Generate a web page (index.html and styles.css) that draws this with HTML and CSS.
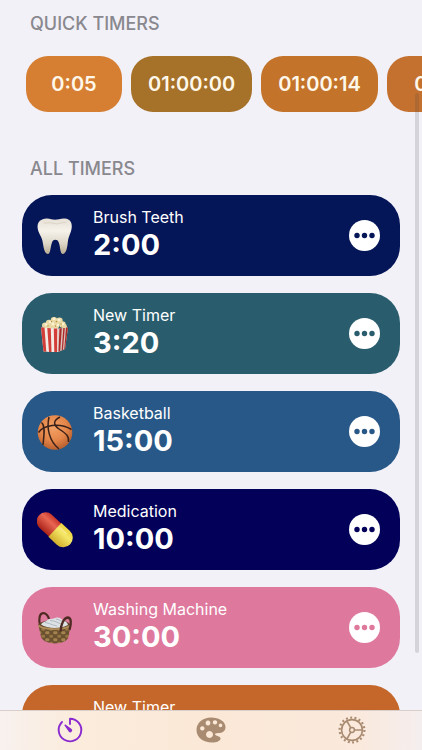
FILE: index.html
```html
<!DOCTYPE html>
<html lang="en">
<head>
  <meta charset="UTF-8">
  <meta name="viewport" content="width=device-width, initial-scale=1.0">
  <title>Timers</title>
  <link rel="stylesheet" href="styles.css">
</head>
<body>
  <main class="content">
    <h2 class="section-title">QUICK TIMERS</h2>
    <div class="quick-timers">
      <button class="quick-btn amber">0:05</button>
      <button class="quick-btn olive">01:00:00</button>
      <button class="quick-btn orange">01:00:14</button>
      <button class="quick-btn rust">0:10</button>
    </div>

    <h2 class="section-title">ALL TIMERS</h2>
    <ul class="timer-list">
      <li class="timer-card navy">
        <svg class="timer-icon" viewBox="0 0 36 36" aria-hidden="true">
          <defs>
            <linearGradient id="tooth" x1="0" y1="0" x2="0" y2="1">
              <stop offset="0" stop-color="#e6e0d6"/>
              <stop offset=".35" stop-color="#f6f2ea"/>
              <stop offset=".7" stop-color="#ddd6c8"/>
              <stop offset="1" stop-color="#b9ab90"/>
            </linearGradient>
          </defs>
          <path fill="url(#tooth)" d="M9.500 .5C13 .3 15 1.800 18 1.800S24 .2 28 .6C33 1 35.200 4.500 34.700 9.500C34.200 15 31.500 18 30.800 24C30.300 29 29.500 35.500 26 36C23 36.300 23.500 29 21.800 24.500C21 22.500 20 21.800 18.300 21.800C16.500 21.800 15.500 23 14.800 25C13.300 29.500 13.500 36.300 10.800 36C7 35.500 6.500 28 5.500 23C4.500 18 1 15 .6 9.500C.2 4 3.500 .8 9.500 .5Z"/>
          <path fill="none" stroke="#c9bfae" stroke-width="1" stroke-linecap="round" opacity=".5" d="M7 5C10 5.500 13 4 17 5.500C21 7 24 4 29 4.500"/>
        </svg>
        <div class="timer-info">
          <span class="timer-name">Brush Teeth</span>
          <span class="timer-time">2:00</span>
        </div>
        <button class="more-btn" aria-label="More options for Brush Teeth">
          <svg viewBox="0 0 31 31"><circle cx="8" cy="15.500" r="2.700"/><circle cx="15.500" cy="15.500" r="2.700"/><circle cx="23" cy="15.500" r="2.700"/></svg>
        </button>
      </li>
      <li class="timer-card teal">
        <svg class="timer-icon" viewBox="0 0 36 36" aria-hidden="true">
          <g fill="#ead9a4">
            <circle cx="8" cy="9.500" r="3"/><circle cx="12" cy="7" r="3.200"/><circle cx="17" cy="4.200" r="3.300"/>
            <circle cx="22.500" cy="4.800" r="3.200"/><circle cx="25.500" cy="8.500" r="3.200"/><circle cx="18" cy="9" r="4.500"/>
            <circle cx="27.500" cy="10.500" r="2.400"/><circle cx="12" cy="10.500" r="3"/>
          </g>
          <g fill="#fbf3d3">
            <circle cx="9" cy="8.500" r="1.300"/><circle cx="13" cy="6" r="1.300"/><circle cx="17" cy="2.800" r="1.400"/>
            <circle cx="22" cy="4" r="1.400"/><circle cx="16" cy="8" r="1.400"/><circle cx="21" cy="9" r="1.300"/><circle cx="26" cy="8" r="1.200"/>
          </g>
          <g fill="#b99343">
            <circle cx="11" cy="10" r=".7"/><circle cx="14.500" cy="5.500" r=".7"/><circle cx="19.500" cy="5.500" r=".8"/>
            <circle cx="18.500" cy="10" r=".7"/><circle cx="24" cy="8" r=".7"/><circle cx="24.500" cy="11" r=".6"/>
          </g>
          <path fill="#f3ebe5" d="M4 11.500L21.500 12.500L31 11.500L28 33L20 36.500L6.500 35.500Z"/>
          <path fill="#d43e38" d="M4 11.500H7.500L9.300 35.700L6.500 35.500ZM10.300 12L13.800 12.200L14.500 36L12 35.900ZM16.800 12.500H20.300L20 36.400L17.300 36.300Z"/>
          <path fill="#b9302c" d="M22.500 12.500L24.800 12.200L23.200 35.100L21.500 35.800ZM26.300 12L27.800 11.900L25.900 34L24.700 34.500ZM29 11.700L31 11.500L28 33L27.200 33.400Z"/>
          <path fill="#7b201d" opacity=".2" d="M21.500 12.500L31 11.500L28 33L20.500 36.300Z"/>
        </svg>
        <div class="timer-info">
          <span class="timer-name">New Timer</span>
          <span class="timer-time">3:20</span>
        </div>
        <button class="more-btn" aria-label="More options for New Timer">
          <svg viewBox="0 0 31 31"><circle cx="8" cy="15.500" r="2.700"/><circle cx="15.500" cy="15.500" r="2.700"/><circle cx="23" cy="15.500" r="2.700"/></svg>
        </button>
      </li>
      <li class="timer-card blue">
        <svg class="timer-icon" viewBox="0 0 36 36" aria-hidden="true">
          <defs>
            <radialGradient id="ball" cx=".45" cy=".35" r=".65">
              <stop offset="0" stop-color="#f3a266"/>
              <stop offset=".6" stop-color="#e48549"/>
              <stop offset="1" stop-color="#b9602f"/>
            </radialGradient>
          </defs>
          <circle cx="18" cy="18.500" r="17.300" fill="url(#ball)"/>
          <g fill="none" stroke="#3a2119" stroke-width="1.500">
            <path d="M1.500 18.500C6 11.500 22 8 34.500 15.500"/>
            <path d="M12 3C9.500 14 12 27 22 35"/>
            <path d="M23 3C16 6.500 16 11 22 15C29 19.500 32.500 22 31.500 28"/>
            <path d="M4.500 8.500C9 12 6.500 24 6 31"/>
          </g>
        </svg>
        <div class="timer-info">
          <span class="timer-name">Basketball</span>
          <span class="timer-time">15:00</span>
        </div>
        <button class="more-btn" aria-label="More options for Basketball">
          <svg viewBox="0 0 31 31"><circle cx="8" cy="15.500" r="2.700"/><circle cx="15.500" cy="15.500" r="2.700"/><circle cx="23" cy="15.500" r="2.700"/></svg>
        </button>
      </li>
      <li class="timer-card midnight">
        <svg class="timer-icon" viewBox="0 0 36 36" aria-hidden="true">
          <defs>
            <linearGradient id="pill-red" x1="0" y1="0" x2="0" y2="1">
              <stop offset="0" stop-color="#c9372a"/>
              <stop offset=".35" stop-color="#e96653"/>
              <stop offset="1" stop-color="#a92318"/>
            </linearGradient>
            <linearGradient id="pill-yellow" x1="0" y1="0" x2="0" y2="1">
              <stop offset="0" stop-color="#ecd23f"/>
              <stop offset=".35" stop-color="#f5e768"/>
              <stop offset="1" stop-color="#d2ae2b"/>
            </linearGradient>
          </defs>
          <g transform="rotate(43 17.500 17.500)">
            <path fill="url(#pill-red)" d="M19 8.500H5.500A9 9 0 0 0 5.500 26.500H19Z"/>
            <path fill="url(#pill-yellow)" d="M18 8H29.500A9.500 9.500 0 0 1 29.500 27H18Z"/>
            <path fill="none" stroke="#fff6c8" stroke-width="1.200" stroke-linecap="round" opacity=".5" d="M21 12.500H29"/>
          </g>
        </svg>
        <div class="timer-info">
          <span class="timer-name">Medication</span>
          <span class="timer-time">10:00</span>
        </div>
        <button class="more-btn" aria-label="More options for Medication">
          <svg viewBox="0 0 31 31"><circle cx="8" cy="15.500" r="2.700"/><circle cx="15.500" cy="15.500" r="2.700"/><circle cx="23" cy="15.500" r="2.700"/></svg>
        </button>
      </li>
      <li class="timer-card pink">
        <svg class="timer-icon" viewBox="0 0 36 36" aria-hidden="true">
          <defs>
            <pattern id="weave" width="8" height="7" patternUnits="userSpaceOnUse">
              <rect width="8" height="7" fill="#69502f"/>
              <rect x=".3" y=".3" width="4" height="3" rx="1" fill="#a58350"/>
              <rect x="4.300" y="3.800" width="3.700" height="3" rx="1" fill="#967443"/>
            </pattern>
          </defs>
          <path fill="none" stroke="#4d2b22" stroke-width="2.200" d="M3 15C1.500 9 2.500 3.500 6 3.200C9 3 11 6 12 9"/>
          <path fill="url(#weave)" d="M1.500 15.500C8 20 26 20 33.500 15.500L31.500 27C29 35.500 7.500 35.500 4 27Z"/>
          <path fill="#5f4329" d="M1.300 15C4 9 30 8 33.500 15C32 20 3.500 20.500 1.300 15Z"/>
          <path fill="#dce1e4" d="M4 14.500C6 11.500 9 12 11 9.500C14 8.500 17 9 19.500 7.500C22 7 25 8.500 26 10.500C29 11 30.500 13 31 15C24 19 10 19 4 14.500Z"/>
          <path fill="none" stroke="#a5afb8" stroke-width=".8" d="M8 12.500C12 13 15 15 20 16M13 10.500C18 10.500 20 13 25 14M19 9C22 10 24 10.500 26 12"/>
          <path fill="none" stroke="#b08c58" stroke-width="1.800" d="M1.500 15.500C7 20 27 20.500 33.500 15.500"/>
          <path fill="none" stroke="#4d2b22" stroke-width="2.300" d="M23.500 21.500C24 14 27 7.800 30.500 7.500C34.500 7.500 34.500 13 32.500 20"/>
        </svg>
        <div class="timer-info">
          <span class="timer-name">Washing Machine</span>
          <span class="timer-time">30:00</span>
        </div>
        <button class="more-btn" aria-label="More options for Washing Machine">
          <svg viewBox="0 0 31 31"><circle cx="8" cy="15.500" r="2.700"/><circle cx="15.500" cy="15.500" r="2.700"/><circle cx="23" cy="15.500" r="2.700"/></svg>
        </button>
      </li>
      <li class="timer-card copper">
        <div class="timer-icon"></div>
        <div class="timer-info">
          <span class="timer-name">New Timer</span>
        </div>
      </li>
    </ul>
    <div class="scroll-thumb"></div>
  </main>

  <nav class="tab-bar">
    <button class="tab active" aria-label="Timers">
      <svg viewBox="0 0 28 28">
        <path fill="none" stroke="currentColor" stroke-width="1.900" stroke-linecap="round" stroke-linejoin="round" d="M6 6A11.300 11.300 0 1 0 14 2.700V8"/>
        <path fill="currentColor" d="M8.300 9.300C8.600 8.500 9.200 8.400 9.800 8.800L15.600 13A1.900 1.900 0 0 1 12.900 15.700Z"/>
      </svg>
    </button>
    <button class="tab" aria-label="Themes">
      <svg class="wide" viewBox="0 0 32 28">
        <path fill="currentColor" fill-rule="evenodd" d="M16 1.500C24 1.500 30.500 5.500 30.500 11C30.500 15 27.500 17 23.500 17C20.500 17 19.300 17.700 20.500 19C22 20.500 25.500 20 25.500 22.500C25.500 25 21.500 26.500 17 26.500C8 26.500 1.500 21.500 1.500 14C1.500 6.500 8 1.500 16 1.500ZM13 4.600a2.400 2.400 0 1 0 .01 0ZM20 4.200a2.200 2.200 0 1 0 .01 0ZM25.500 7.600a1.800 1.800 0 1 0 .01 0ZM7.300 10.200a2.200 2.200 0 1 0 .01 0ZM14.500 15a3.500 3.500 0 1 0 .01 0Z"/>
      </svg>
    </button>
    <button class="tab" aria-label="Settings">
      <svg viewBox="0 0 28 28" fill="none" stroke="currentColor">
        <circle cx="14" cy="14" r="10.400" stroke-width="1.600"/>
        <circle cx="14" cy="14" r="12.400" stroke-width="2.200" stroke-dasharray="1.900 2.428"/>
        <circle cx="14" cy="14" r="2.400" stroke-width="1.500"/>
        <path stroke-width="1.600" d="M16.400 14H24M12.800 11.900L8.900 5M12.800 16.100L8.900 23"/>
      </svg>
    </button>
  </nav>
</body>
</html>
```
FILE: styles.css
```css
* {
  box-sizing: border-box;
}

body {
  font-family: Inter, "Liberation Sans", sans-serif;
  margin: 0;
  height: 100vh;
  display: flex;
  flex-direction: column;
  background-color: #f2f1f8;
  overflow: hidden;
}

button {
  border: none;
  padding: 0;
  font-family: inherit;
  cursor: pointer;
}

.content {
  position: relative;
  flex: 1;
  min-height: 0;
  overflow: hidden;
  padding: 12px 22px 0;
}

.section-title {
  margin: 0;
  padding-left: 8px;
  font-size: 18px;
  line-height: 24px;
  font-weight: 500;
  color: #89888e;
}

.quick-timers {
  display: flex;
  gap: 9px;
  margin: 20px -22px 45px 0;
  padding-left: 4px;
  overflow: hidden;
}

.quick-btn {
  flex: none;
  min-width: 96px;
  height: 56px;
  padding: 0 17px;
  border-radius: 22px;
  font-size: 20px;
  font-weight: 600;
  color: #fff8ea;
}

.amber { background-color: #d67f32; }
.olive { background-color: #a67128; }
.orange { background-color: #c3742a; }
.rust { background-color: #c4712f; }

.timer-list {
  list-style: none;
  margin: 14px 0 0;
  padding: 0;
  display: flex;
  flex-direction: column;
  gap: 17px;
}

.timer-card {
  flex: none;
  display: flex;
  align-items: center;
  height: 81px;
  padding: 0 20px 0 15px;
  border-radius: 30px;
  color: #fff;
}

.navy { background-color: #041558; }
.teal { background-color: #295d6d; }
.blue { background-color: #285887; }
.midnight { background-color: #020059; }
.pink { background-color: #de789d; }
.copper { background-color: #c5672b; }

.timer-icon {
  flex: none;
  width: 36px;
  height: 36px;
}

.timer-info {
  flex: 1;
  align-self: flex-start;
  display: flex;
  flex-direction: column;
  padding: 12px 0 0 20px;
}

.timer-name {
  font-size: 16px;
  line-height: 20px;
}

.timer-time {
  font-size: 29px;
  line-height: 35px;
  font-weight: 700;
}

.more-btn {
  flex: none;
  width: 31px;
  height: 31px;
  border-radius: 50%;
  background-color: #fff;
}

.more-btn svg {
  display: block;
  width: 100%;
}

.navy .more-btn { fill: #041558; }
.teal .more-btn { fill: #295d6d; }
.blue .more-btn { fill: #285887; }
.midnight .more-btn { fill: #020059; }
.pink .more-btn { fill: #de789d; }

.scroll-thumb {
  position: absolute;
  top: 93px;
  right: 3px;
  width: 4px;
  height: 560px;
  border-radius: 2px;
  background-color: rgba(60, 60, 67, 0.16);
}

.tab-bar {
  flex: none;
  display: flex;
  height: 40px;
  padding-bottom: 2px;
  border-top: 1px solid #d9cfca;
  background: linear-gradient(90deg, #f8f1ee, #fbecdc 18%, #fbe8d7 50%, #fae9dc 85%, #f5eeef);
}

.tab {
  flex: 1;
  display: flex;
  align-items: center;
  justify-content: center;
  background: none;
  color: #a98b71;
}

.tab svg {
  width: 28px;
  height: 28px;
}

.tab svg.wide {
  width: 32px;
}

.tab.active {
  color: #8a2bd0;
}
```
